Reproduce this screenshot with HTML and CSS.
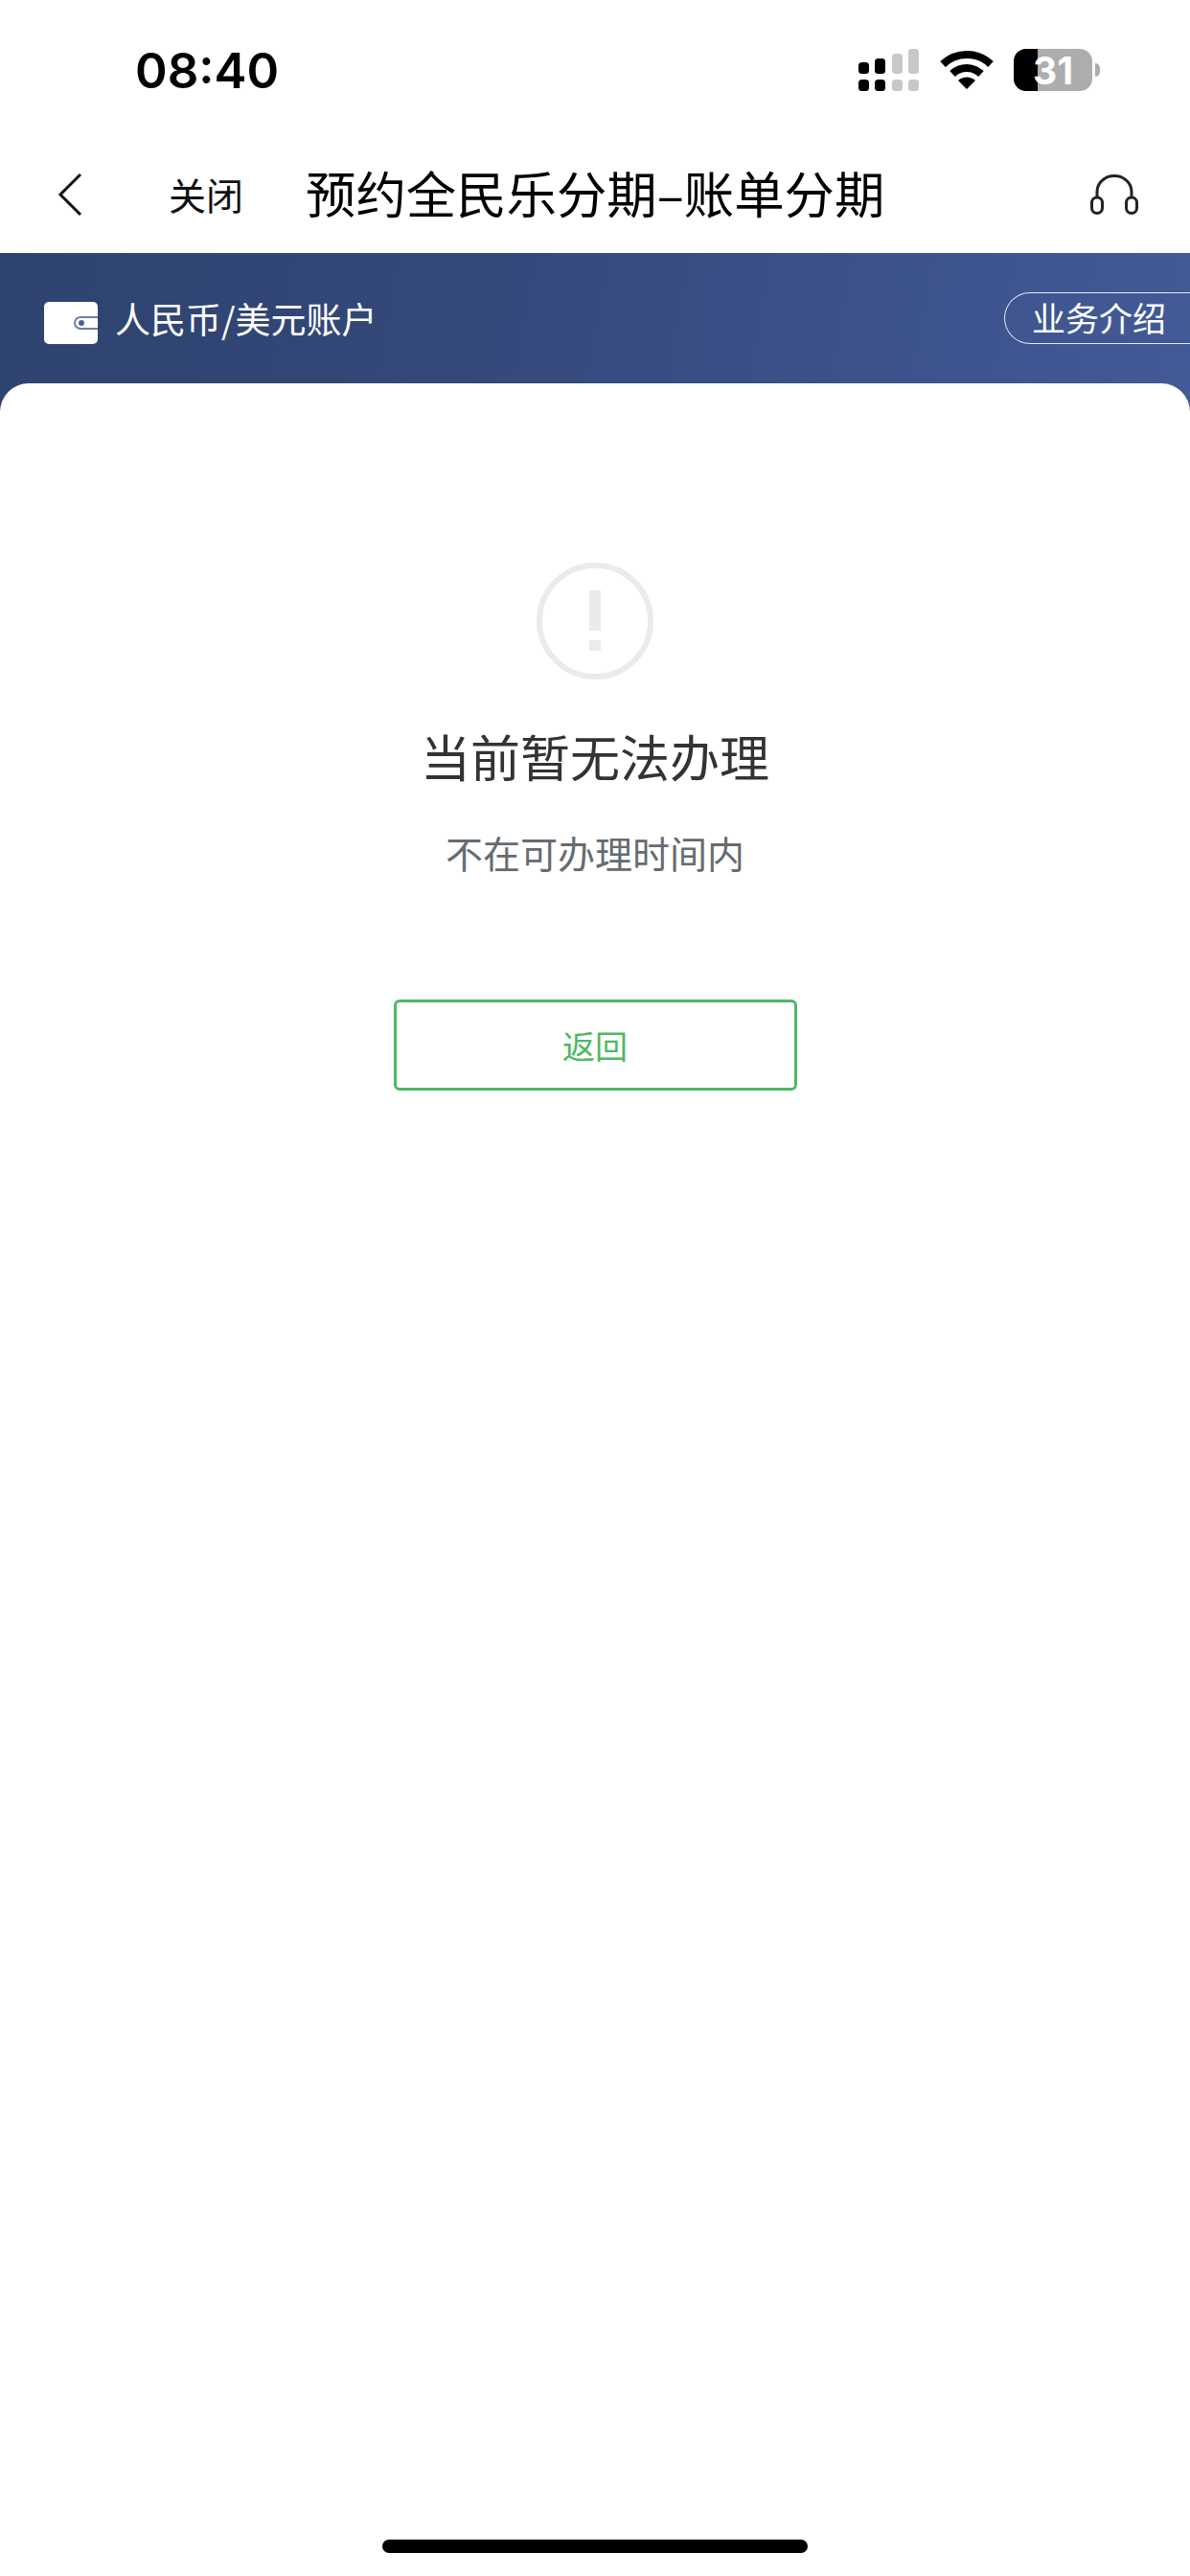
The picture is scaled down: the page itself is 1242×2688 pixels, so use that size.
FILE: index.html
```html
<!DOCTYPE html>
<html lang="zh-CN">
<head>
    <meta charset="UTF-8">
    <meta name="viewport" content="width=device-width, initial-scale=1.0">
    <title>预约全民乐分期-账单分期</title>
    <link rel="stylesheet" href="styles.css">
</head>
<body>
    <div class="page">
        <div class="status-bar">
            <span class="status-time">08:40</span>
            <div class="status-icons">
                <svg class="icon-signal" width="64" height="44" viewBox="0 0 64 44">
                    <rect x="0" y="14" width="11" height="12" rx="3.5" fill="#000"/>
                    <rect x="0" y="32" width="11" height="12" rx="3.5" fill="#000"/>
                    <rect x="17" y="10" width="11" height="16" rx="3.5" fill="#000"/>
                    <rect x="17" y="32" width="11" height="12" rx="3.5" fill="#000"/>
                    <rect x="35" y="5" width="11" height="21" rx="3.5" fill="#c8c8c8"/>
                    <rect x="35" y="32" width="11" height="12" rx="3.5" fill="#c8c8c8"/>
                    <rect x="52" y="0" width="11" height="26" rx="3.5" fill="#c8c8c8"/>
                    <rect x="52" y="32" width="11" height="12" rx="3.5" fill="#c8c8c8"/>
                </svg>
                <svg class="icon-wifi" width="56" height="42" viewBox="0 0 56 42">
                    <path d="M3 15 A36 36 0 0 1 53 15" fill="none" stroke="#000" stroke-width="8" stroke-linecap="butt"/>
                    <path d="M13 25 A22 22 0 0 1 43 25" fill="none" stroke="#000" stroke-width="8"/>
                    <path d="M28 41 L19 32 A13 13 0 0 1 37 32 Z" fill="#000"/>
                </svg>
                <div class="battery">
                    <div class="battery-body">
                        <div class="battery-fill"></div>
                        <span class="battery-num">31</span>
                    </div>
                    <div class="battery-cap"></div>
                </div>
            </div>
        </div>

        <div class="nav-bar">
            <svg class="nav-back" width="26" height="46" viewBox="0 0 26 46">
                <path d="M24 2 L3 23 L24 44" fill="none" stroke="#111" stroke-width="3"/>
            </svg>
            <span class="nav-close">关闭</span>
            <h1 class="nav-title">预约全民乐分期–账单分期</h1>
            <svg class="nav-service" width="50" height="42" viewBox="0 0 50 42">
                <path d="M7 24 V18 A18 16.5 0 0 1 43 18 V24" fill="none" stroke="#222" stroke-width="3"/>
                <rect x="1.5" y="24" width="11" height="16.5" rx="5.5" fill="none" stroke="#222" stroke-width="3"/>
                <rect x="37.5" y="24" width="11" height="16.5" rx="5.5" fill="none" stroke="#222" stroke-width="3"/>
            </svg>
        </div>

        <div class="account-bar">
            <div class="account-label">
                <svg class="icon-wallet" width="56" height="44" viewBox="0 0 56 44">
                    <rect x="0" y="0" width="56" height="44" rx="5" fill="#fff"/>
                    <path d="M56 16 H38 A6 6 0 0 0 38 28 H56" fill="none" stroke="#6f7fa5" stroke-width="2"/>
                    <circle cx="39" cy="22" r="3" fill="#50648f"/>
                </svg>
                <span>人民币/美元账户</span>
            </div>
            <a class="intro-btn" href="#">业务介绍</a>
        </div>

        <div class="result-card">
            <svg class="icon-alert" width="122" height="122" viewBox="0 0 122 122">
                <circle cx="61" cy="61" r="58" fill="none" stroke="#ebebeb" stroke-width="6"/>
                <rect x="55" y="29" width="12" height="42" fill="#ebebeb"/>
                <rect x="55" y="81" width="12" height="11" fill="#ebebeb"/>
            </svg>
            <h2 class="result-title">当前暂无法办理</h2>
            <p class="result-desc">不在可办理时间内</p>
            <a class="back-btn" href="#">返回</a>
            <div class="home-indicator"></div>
        </div>
    </div>
</body>
</html>
```

FILE: styles.css
```css
* {
    margin: 0;
    padding: 0;
    box-sizing: border-box;
    font-family: 'Noto Sans CJK SC', 'Liberation Sans', sans-serif;
}

body {
    background: #ffffff;
}

.page {
    width: 1242px;
    height: 2688px;
    display: flex;
    flex-direction: column;
    overflow: hidden;
    background: #ffffff;
}

.status-bar {
    height: 130px;
    flex-shrink: 0;
    display: flex;
    align-items: center;
    justify-content: space-between;
    padding: 16px 94px 0 141px;
}

.status-time {
    font-family: 'Inter', 'Liberation Sans', sans-serif;
    font-size: 51px;
    font-weight: 600;
    color: #000;
}

.status-icons {
    display: flex;
    align-items: center;
    gap: 21px;
}

.battery {
    display: flex;
    align-items: center;
    gap: 3px;
}

.battery-body {
    position: relative;
    width: 82px;
    height: 44px;
    border-radius: 13px;
    background: #adadad;
    overflow: hidden;
    display: flex;
    align-items: center;
    justify-content: center;
}

.battery-fill {
    position: absolute;
    left: 0;
    top: 0;
    bottom: 0;
    width: 25px;
    background: #000;
}

.battery-num {
    position: relative;
    font-family: 'Inter', 'Liberation Sans', sans-serif;
    font-size: 39px;
    font-weight: 700;
    color: #fff;
}

.battery-cap {
    width: 5px;
    height: 14px;
    border-radius: 0 7px 7px 0;
    background: #adadad;
}

.nav-bar {
    height: 134px;
    flex-shrink: 0;
    display: flex;
    align-items: center;
    padding: 10px 54px 0 60px;
    color: #111;
}

.nav-back,
.nav-service {
    flex-shrink: 0;
    margin-top: 2px;
}

.nav-close {
    font-size: 39px;
    margin-left: 90px;
    width: 76px;
    white-space: nowrap;
}

.nav-title {
    font-size: 52.4px;
    font-weight: 400;
    margin-left: 67px;
    margin-bottom: 4px;
    flex: 1;
    white-space: nowrap;
    color: #000;
}

/* runs on behind the card so its round corners show blue */
.account-bar {
    height: 166px;
    flex-shrink: 0;
    display: flex;
    align-items: flex-start;
    justify-content: space-between;
    padding: 41px 0 0 46px;
    background: linear-gradient(100deg, #2f436f 0%, #34487a 40%, #435a98 100%);
    color: #fff;
}

.account-label {
    display: flex;
    align-items: center;
    gap: 18px;
    font-size: 37px;
    line-height: 54px;
}

.icon-wallet {
    margin-top: 10px;
}

.intro-btn {
    width: 194px;
    height: 54px;
    display: flex;
    align-items: center;
    padding: 0 0 3px 28px;
    border: 1px solid #e6e9f2;
    border-right: none;
    border-radius: 27px 0 0 27px;
    font-size: 35px;
    color: #fff;
    text-decoration: none;
    white-space: nowrap;
}

.result-card {
    flex: 1;
    margin-top: -30px;
    display: flex;
    flex-direction: column;
    align-items: center;
    padding-top: 187px;
    border-radius: 30px 30px 0 0;
    background: #ffffff;
}

.icon-alert {
    flex-shrink: 0;
}

.result-title {
    margin-top: 48px;
    font-size: 52px;
    font-weight: 400;
    line-height: 64px;
    color: #333333;
}

.result-desc {
    margin-top: 40px;
    font-size: 39px;
    line-height: 56px;
    color: #666b70;
}

.back-btn {
    margin-top: 126px;
    width: 421px;
    height: 95px;
    display: flex;
    align-items: center;
    justify-content: center;
    border: 3px solid #4cb963;
    border-radius: 6px;
    font-size: 34px;
    color: #4cb963;
    text-decoration: none;
}

.home-indicator {
    width: 444px;
    height: 14px;
    margin-top: auto;
    margin-bottom: 24px;
    border-radius: 7px;
    background: #000;
}
```
